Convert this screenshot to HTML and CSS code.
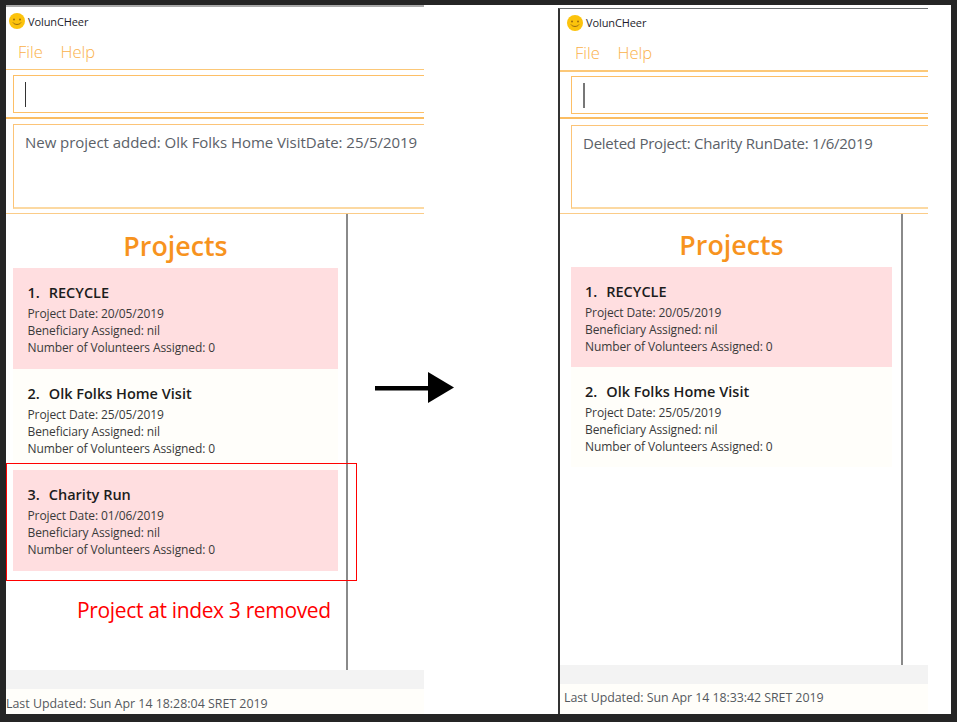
FILE: index.html
```html
<!DOCTYPE html>
<html lang="en">
<head>
<meta charset="utf-8">
<title>VolunCHeer</title>
<link rel="stylesheet" href="styles.css">
</head>
<body>
<main class="sheet">
  <section class="window window-before">
    <header class="titlebar">
      <svg class="logo" viewBox="0 0 16 16"><circle cx="8" cy="8" r="8" fill="#fcc30c"/><circle cx="5" cy="6.5" r="1" fill="#9a6b10"/><circle cx="11" cy="6.5" r="1" fill="#9a6b10"/><path d="M4 9.5c1.6 2.6 6.4 2.6 8 0" fill="none" stroke="#9a6b10" stroke-width="1"/></svg>
      <span>VolunCHeer</span>
    </header>
    <nav class="menu"><span>File</span><span>Help</span></nav>
    <div class="command-pane"><div class="command-box"><i class="caret"></i></div></div>
    <div class="result-pane"><div class="result-box">New project added: Olk Folks Home VisitDate: 25/5/2019</div></div>
    <div class="content">
      <div class="project-pane">
        <h1 class="heading">Projects</h1>
        <article class="card card-pink">
          <h2><span>1.</span>RECYCLE</h2>
          <p>Project Date: 20/05/2019</p><p>Beneficiary Assigned: nil</p><p>Number of Volunteers Assigned: 0</p>
        </article>
        <article class="card card-cream">
          <h2><span>2.</span>Olk Folks Home Visit</h2>
          <p>Project Date: 25/05/2019</p><p>Beneficiary Assigned: nil</p><p>Number of Volunteers Assigned: 0</p>
        </article>
        <article class="card card-pink">
          <h2><span>3.</span>Charity Run</h2>
          <p>Project Date: 01/06/2019</p><p>Beneficiary Assigned: nil</p><p>Number of Volunteers Assigned: 0</p>
        </article>
      </div>
    </div>
    <div class="status-gap"></div>
    <footer class="status">Last Updated: Sun Apr 14 18:28:04 SRET 2019</footer>
  </section>

  <div class="highlight"></div>
  <div class="note">Project at index 3 removed</div>
  <svg class="arrow" viewBox="0 0 80 31"><rect x="0" y="14" width="54" height="4.5" fill="#000"/><polygon points="53,0 79,15.5 53,31" fill="#000"/></svg>

  <section class="window window-after">
    <header class="titlebar">
      <svg class="logo" viewBox="0 0 16 16"><circle cx="8" cy="8" r="8" fill="#fcc30c"/><circle cx="5" cy="6.5" r="1" fill="#9a6b10"/><circle cx="11" cy="6.5" r="1" fill="#9a6b10"/><path d="M4 9.5c1.6 2.6 6.4 2.6 8 0" fill="none" stroke="#9a6b10" stroke-width="1"/></svg>
      <span>VolunCHeer</span>
    </header>
    <nav class="menu"><span>File</span><span>Help</span></nav>
    <div class="command-pane"><div class="command-box"><i class="caret"></i></div></div>
    <div class="result-pane"><div class="result-box">Deleted Project: Charity RunDate: 1/6/2019</div></div>
    <div class="content">
      <div class="project-pane">
        <h1 class="heading">Projects</h1>
        <article class="card card-pink">
          <h2><span>1.</span>RECYCLE</h2>
          <p>Project Date: 20/05/2019</p><p>Beneficiary Assigned: nil</p><p>Number of Volunteers Assigned: 0</p>
        </article>
        <article class="card card-cream">
          <h2><span>2.</span>Olk Folks Home Visit</h2>
          <p>Project Date: 25/05/2019</p><p>Beneficiary Assigned: nil</p><p>Number of Volunteers Assigned: 0</p>
        </article>
      </div>
    </div>
    <div class="status-gap"></div>
    <footer class="status">Last Updated: Sun Apr 14 18:33:42 SRET 2019</footer>
  </section>
</main>
</body>
</html>
```
FILE: styles.css
```css
* { box-sizing: border-box; }
html, body { margin: 0; padding: 0; }
body {
  width: 957px;
  height: 722px;
  overflow: hidden;
  background: #252525;
  font-family: "Open Sans", "Noto Sans", sans-serif;
}
.sheet {
  position: absolute;
  left: 6px;
  top: 5px;
  width: 945px;
  height: 709px;
  background: #fff;
}
.window {
  position: absolute;
  display: flex;
  flex-direction: column;
  background: #fff;
  overflow: hidden;
}
.window-before {
  left: 0;
  top: 0;
  width: 418px;
  height: 709px;
  border-top: 2px solid #a9a9a9;
}
.window-after {
  left: 552px;
  top: 3px;
  width: 370px;
  height: 706px;
  border-top: 1px solid #6d7072;
  border-left: 2px solid #333;
}
.titlebar {
  height: 30px;
  flex: none;
  display: flex;
  align-items: center;
  gap: 3px;
  padding: 0 0 2px 3px;
  font-size: 11px;
  letter-spacing: -0.1px;
  color: #1d1d2b;
}
.window-after .titlebar { padding: 0 0 3px 7px; }
.logo { width: 16px; height: 16px; flex: none; }
.menu {
  height: 32px;
  flex: none;
  display: flex;
  align-items: center;
  gap: 17.5px;
  padding: 0 0 3px 12px;
  font-size: 16.6px;
  font-weight: 300;
  color: #fab14a;
}
.window-after .menu { padding: 0 0 4px 15px; height: 31px; }
.command-pane {
  height: 50px;
  flex: none;
  padding: 5px 0 0 7px;
  border-top: 1px solid #fcc878;
  border-bottom: 2px solid #fbbd62;
}
.window-after .command-pane { padding: 4px 0 0 11px; border-top-width: 2px; height: 49px; }
.command-box {
  height: 38px;
  margin-right: -2px;
  padding: 6px 0 0 11px;
  border: 1px solid #fdbf66;
  border-right: 0;
}
.caret { display: block; width: 1px; height: 25px; background: #333; }
.window-after .caret { background: #777; width: 2px; }
.result-pane {
  height: 95px;
  flex: none;
  padding: 5px 0 0 7px;
  border-bottom: 1px solid #fbcc88;
}
.window-after .result-pane { padding: 6px 0 0 11px; }
.result-box {
  height: 85px;
  padding: 5px 0 0 11px;
  border: 1px solid #fcc478;
  border-bottom: 2px solid #fcd9a2;
  border-right: 0;
  font-size: 15px;
  line-height: 24px;
  letter-spacing: -0.04px;
  white-space: nowrap;
  color: #5b6168;
}
.window-after .result-box { height: 84px; letter-spacing: -0.24px; }
.content {
  flex: 1;
  min-height: 0;
  display: flex;
}
.project-pane {
  width: 342px;
  flex: none;
  padding: 0 8px 0 7px;
  border-right: 2px solid #8a8a8a;
}
.window-after .project-pane { width: 343px; padding: 0 9px 0 11px; }
.heading {
  margin: 0;
  height: 54px;
  padding-top: 14px;
  text-align: center;
  font-size: 26.8px;
  line-height: 35px;
  font-weight: 600;
  color: #f7931e;
}
.window-after .heading { height: 53px; padding-top: 13px; }
.card {
  height: 101px;
  padding: 15px 0 0 14.5px;
  color: #3a3a3a;
  font-size: 12px;
  letter-spacing: -0.1px;
  line-height: 17px;
}
.window-after .card { height: 100px; padding-left: 14px; }
.card-pink { background: #ffdee0; }
.card-cream { background: #fffefa; }
.card h2 {
  margin: 0 0 2px;
  font-size: 14.5px;
  letter-spacing: 0;
  line-height: 20px;
  font-weight: 600;
  color: #1c1c1c;
}
.card h2 span { margin-right: 9px; }
.card p { margin: 0; white-space: nowrap; }
.status-gap {
  height: 19px;
  flex: none;
  background: #f3f3f3;
}
.status {
  height: 25px;
  flex: none;
  background: #fffefa;
  font-size: 12.4px;
  line-height: 29px;
  color: #55595e;
  white-space: nowrap;
}
.window-after .status { height: 30px; padding-left: 4px; line-height: 28px; letter-spacing: -0.05px; }
.highlight {
  position: absolute;
  left: 0;
  top: 458px;
  width: 351px;
  height: 118px;
  border: 1px solid #f00;
}
.note {
  position: absolute;
  left: 71px;
  top: 591px;
  font-size: 21px;
  letter-spacing: -0.35px;
  line-height: 29px;
  color: #f00;
  white-space: nowrap;
}
.arrow {
  position: absolute;
  left: 369px;
  top: 367px;
  width: 80px;
  height: 31px;
}
```
